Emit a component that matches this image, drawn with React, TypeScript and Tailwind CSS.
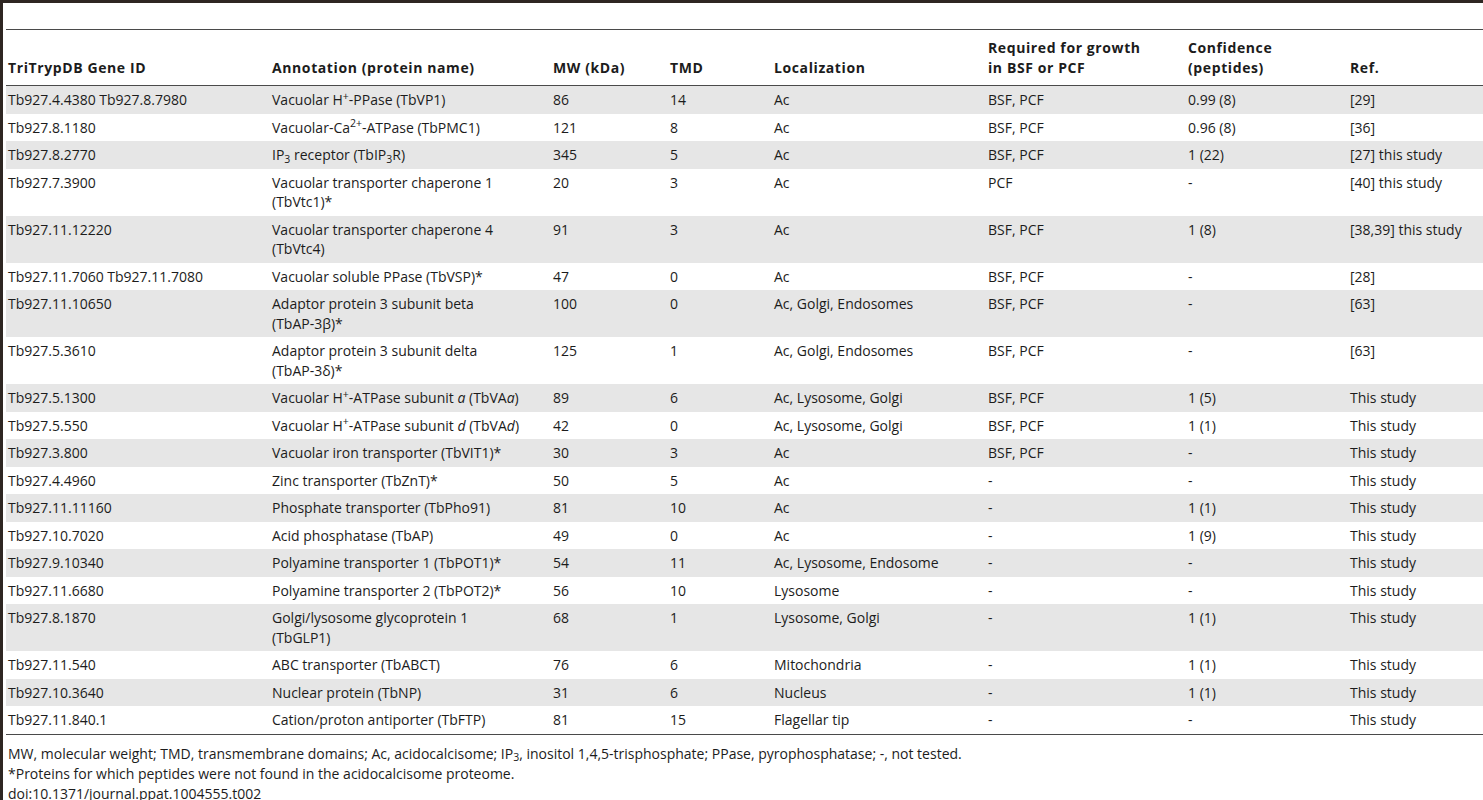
import React from "react";

type Row = {
  id: React.ReactNode;
  name: React.ReactNode;
  mw: string;
  tmd: string;
  loc: string;
  growth: string;
  conf: string;
  refs: string;
};

const rows: Row[] = [
  { id: "Tb927.4.4380 Tb927.8.7980", name: <>Vacuolar H<sup>+</sup>-PPase (TbVP1)</>, mw: "86", tmd: "14", loc: "Ac", growth: "BSF, PCF", conf: "0.99 (8)", refs: "[29]" },
  { id: "Tb927.8.1180", name: <>Vacuolar-Ca<sup>2+</sup>-ATPase (TbPMC1)</>, mw: "121", tmd: "8", loc: "Ac", growth: "BSF, PCF", conf: "0.96 (8)", refs: "[36]" },
  { id: "Tb927.8.2770", name: <>IP<sub>3</sub> receptor (TbIP<sub>3</sub>R)</>, mw: "345", tmd: "5", loc: "Ac", growth: "BSF, PCF", conf: "1 (22)", refs: "[27] this study" },
  { id: "Tb927.7.3900", name: <>Vacuolar transporter chaperone 1<br />(TbVtc1)*</>, mw: "20", tmd: "3", loc: "Ac", growth: "PCF", conf: "-", refs: "[40] this study" },
  { id: "Tb927.11.12220", name: <>Vacuolar transporter chaperone 4<br />(TbVtc4)</>, mw: "91", tmd: "3", loc: "Ac", growth: "BSF, PCF", conf: "1 (8)", refs: "[38,39] this study" },
  { id: "Tb927.11.7060 Tb927.11.7080", name: "Vacuolar soluble PPase (TbVSP)*", mw: "47", tmd: "0", loc: "Ac", growth: "BSF, PCF", conf: "-", refs: "[28]" },
  { id: "Tb927.11.10650", name: <>Adaptor protein 3 subunit beta<br />(TbAP-3β)*</>, mw: "100", tmd: "0", loc: "Ac, Golgi, Endosomes", growth: "BSF, PCF", conf: "-", refs: "[63]" },
  { id: "Tb927.5.3610", name: <>Adaptor protein 3 subunit delta<br />(TbAP-3δ)*</>, mw: "125", tmd: "1", loc: "Ac, Golgi, Endosomes", growth: "BSF, PCF", conf: "-", refs: "[63]" },
  { id: "Tb927.5.1300", name: <>Vacuolar H<sup>+</sup>-ATPase subunit <i>a</i> (TbVA<i>a</i>)</>, mw: "89", tmd: "6", loc: "Ac, Lysosome, Golgi", growth: "BSF, PCF", conf: "1 (5)", refs: "This study" },
  { id: "Tb927.5.550", name: <>Vacuolar H<sup>+</sup>-ATPase subunit <i>d</i> (TbVA<i>d</i>)</>, mw: "42", tmd: "0", loc: "Ac, Lysosome, Golgi", growth: "BSF, PCF", conf: "1 (1)", refs: "This study" },
  { id: "Tb927.3.800", name: "Vacuolar iron transporter (TbVIT1)*", mw: "30", tmd: "3", loc: "Ac", growth: "BSF, PCF", conf: "-", refs: "This study" },
  { id: "Tb927.4.4960", name: "Zinc transporter (TbZnT)*", mw: "50", tmd: "5", loc: "Ac", growth: "-", conf: "-", refs: "This study" },
  { id: "Tb927.11.11160", name: "Phosphate transporter (TbPho91)", mw: "81", tmd: "10", loc: "Ac", growth: "-", conf: "1 (1)", refs: "This study" },
  { id: "Tb927.10.7020", name: "Acid phosphatase (TbAP)", mw: "49", tmd: "0", loc: "Ac", growth: "-", conf: "1 (9)", refs: "This study" },
  { id: "Tb927.9.10340", name: "Polyamine transporter 1 (TbPOT1)*", mw: "54", tmd: "11", loc: "Ac, Lysosome, Endosome", growth: "-", conf: "-", refs: "This study" },
  { id: "Tb927.11.6680", name: "Polyamine transporter 2 (TbPOT2)*", mw: "56", tmd: "10", loc: "Lysosome", growth: "-", conf: "-", refs: "This study" },
  { id: "Tb927.8.1870", name: <>Golgi/lysosome glycoprotein 1<br />(TbGLP1)</>, mw: "68", tmd: "1", loc: "Lysosome, Golgi", growth: "-", conf: "1 (1)", refs: "This study" },
  { id: "Tb927.11.540", name: "ABC transporter (TbABCT)", mw: "76", tmd: "6", loc: "Mitochondria", growth: "-", conf: "1 (1)", refs: "This study" },
  { id: "Tb927.10.3640", name: "Nuclear protein (TbNP)", mw: "31", tmd: "6", loc: "Nucleus", growth: "-", conf: "1 (1)", refs: "This study" },
  { id: "Tb927.11.840.1", name: "Cation/proton antiporter (TbFTP)", mw: "81", tmd: "15", loc: "Flagellar tip", growth: "-", conf: "-", refs: "This study" },
];

const th = "pl-[2px] py-2 text-left align-bottom font-bold tracking-[0.6px] whitespace-nowrap";
const td = "pl-[2px] py-1 align-top whitespace-nowrap";

export default function App() {
  return (
    <div className="min-h-[800px] bg-white text-[#1c1c1c] text-[14px] leading-[19.5px] font-['Open_Sans',sans-serif]">
      <div className="min-h-[800px] border-l-[3px] border-t-[3px] border-[#2e2622] pl-[3px] pt-[26px]">
        {/* tabela principal */}
        <table className="w-[1477px] table-fixed border-collapse">
          <colgroup>
            <col className="w-[264px]" />
            <col className="w-[281px]" />
            <col className="w-[117px]" />
            <col className="w-[104px]" />
            <col className="w-[214px]" />
            <col className="w-[200px]" />
            <col className="w-[162px]" />
            <col className="w-[135px]" />
          </colgroup>
          <thead>
            <tr className="border-t border-b border-[#4a4a4a]">
              <th className={th}>TriTrypDB Gene ID</th>
              <th className={th}>Annotation (protein name)</th>
              <th className={th}>MW (kDa)</th>
              <th className={th}>TMD</th>
              <th className={th}>Localization</th>
              <th className={th}>
                Required for growth
                <br />
                in BSF or PCF
              </th>
              <th className={th}>
                Confidence
                <br />
                (peptides)
              </th>
              <th className={th}>Ref.</th>
            </tr>
          </thead>
          <tbody className="border-b border-[#4a4a4a]">
            {rows.map((r, i) => (
              <tr key={i} className={i % 2 === 0 ? "bg-[#e6e6e6]" : "bg-white"}>
                <td className={td}>{r.id}</td>
                <td className={td}>{r.name}</td>
                <td className={td}>{r.mw}</td>
                <td className={td}>{r.tmd}</td>
                <td className={td}>{r.loc}</td>
                <td className={td}>{r.growth}</td>
                <td className={td}>{r.conf}</td>
                <td className={td}>{r.refs}</td>
              </tr>
            ))}
          </tbody>
        </table>

        {/* notas de rodapé */}
        <div className="mt-[9px] pl-[2px] leading-[20px]">
          <p>
            MW, molecular weight; TMD, transmembrane domains; Ac, acidocalcisome; IP<sub>3</sub>, inositol 1,4,5-trisphosphate; PPase,
            pyrophosphatase; -, not tested.
          </p>
          <p>*Proteins for which peptides were not found in the acidocalcisome proteome.</p>
          <p>doi:10.1371/journal.ppat.1004555.t002</p>
        </div>
      </div>
    </div>
  );
}
